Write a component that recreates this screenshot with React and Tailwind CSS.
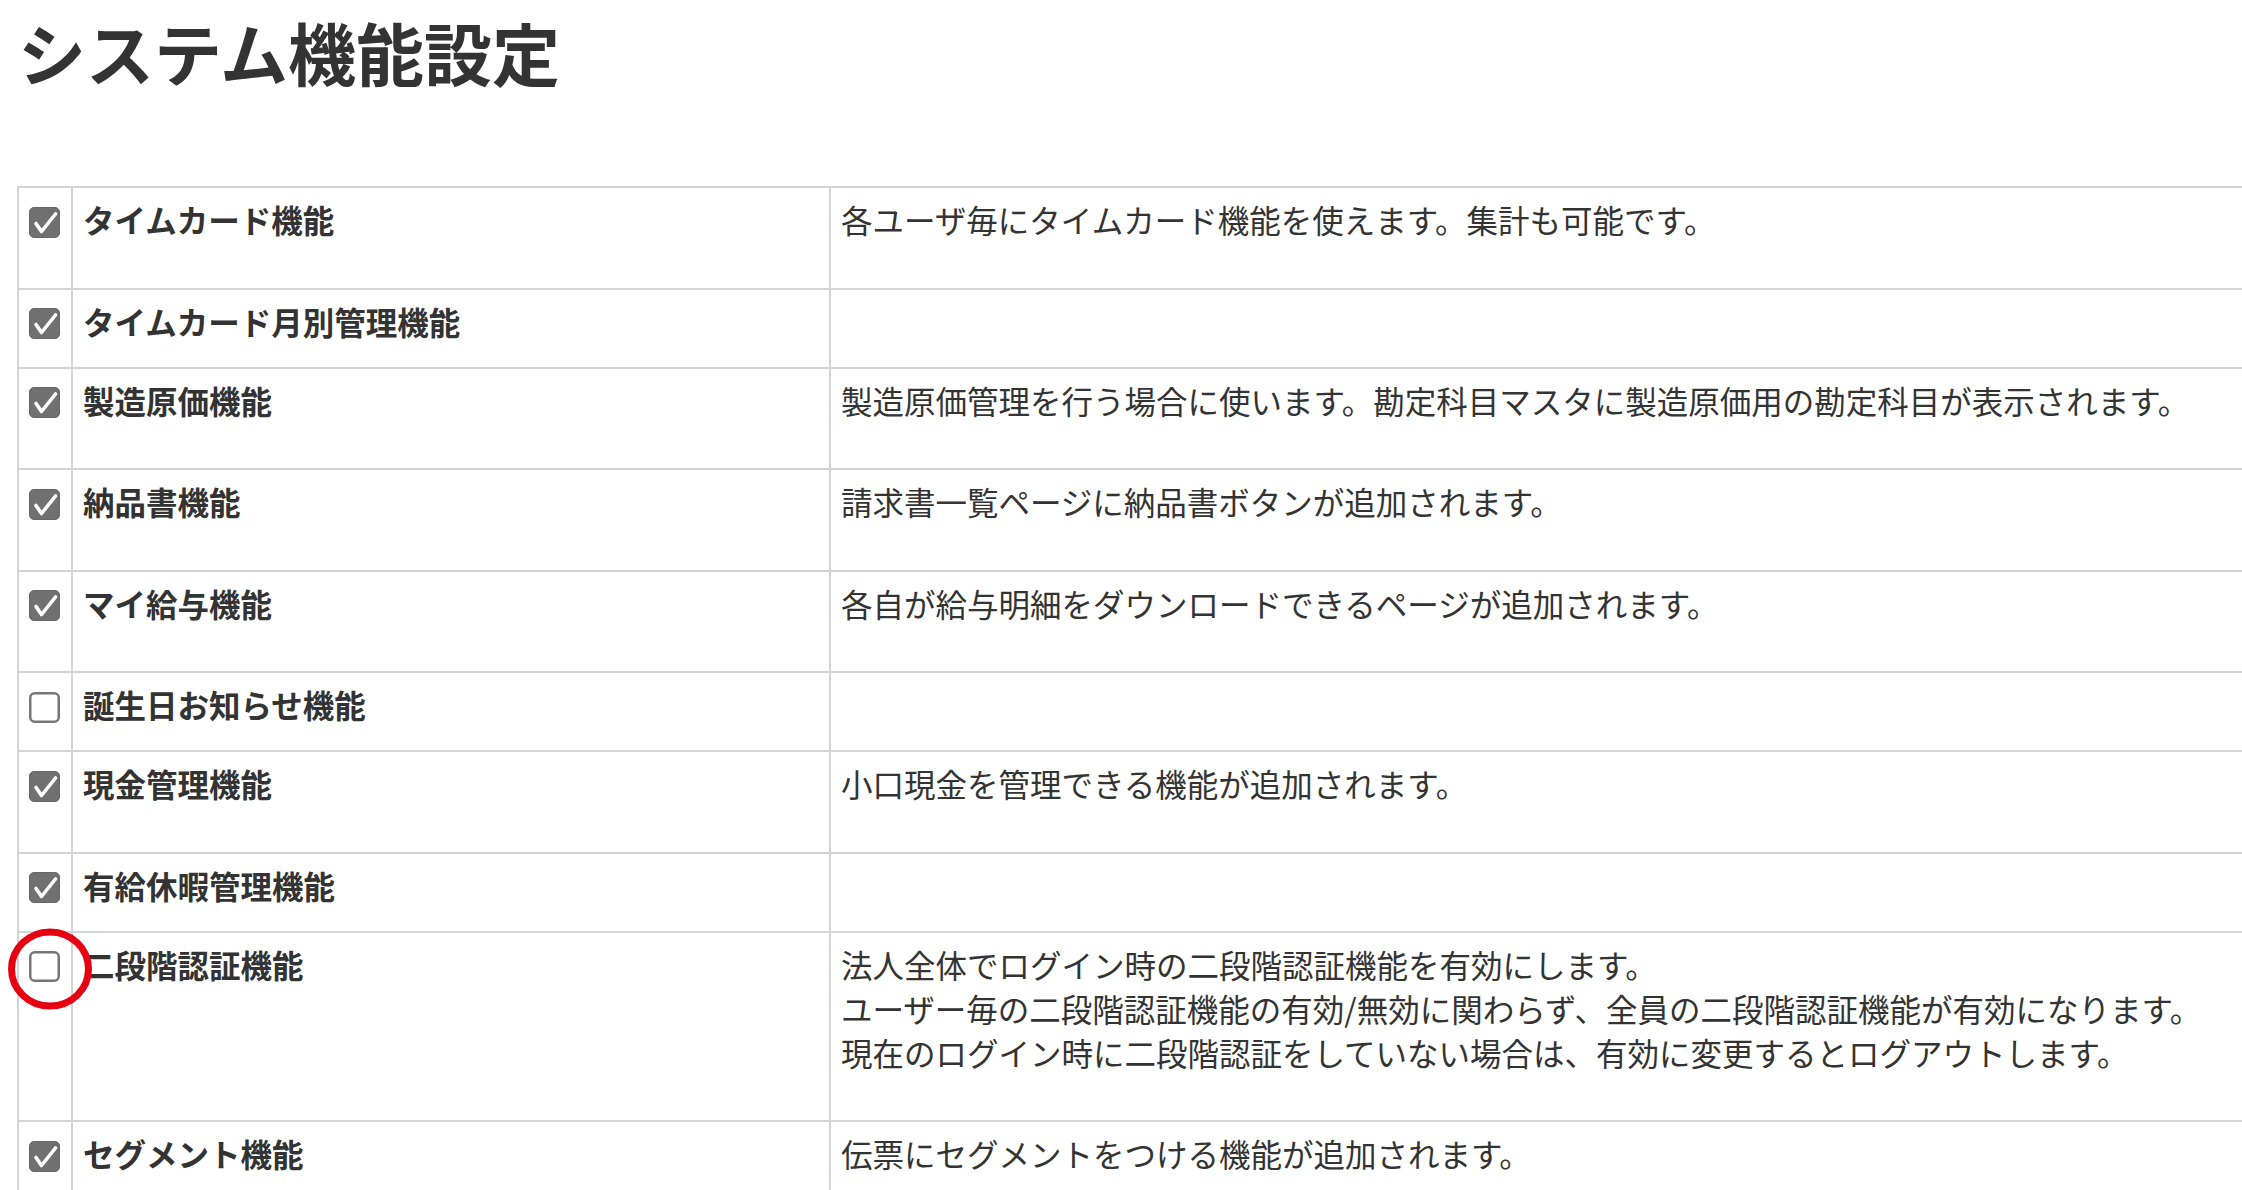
import React from "react";

const rows = [
  { name: "タイムカード機能", desc: ["各ユーザ毎にタイムカード機能を使えます。集計も可能です。"], checked: true },
  { name: "タイムカード月別管理機能", desc: [], checked: true },
  {
    name: "製造原価機能",
    desc: ["製造原価管理を行う場合に使います。勘定科目マスタに製造原価用の勘定科目が表示されます。"],
    checked: true,
  },
  { name: "納品書機能", desc: ["請求書一覧ページに納品書ボタンが追加されます。"], checked: true },
  { name: "マイ給与機能", desc: ["各自が給与明細をダウンロードできるページが追加されます。"], checked: true },
  { name: "誕生日お知らせ機能", desc: [], checked: false },
  { name: "現金管理機能", desc: ["小口現金を管理できる機能が追加されます。"], checked: true },
  { name: "有給休暇管理機能", desc: [], checked: true },
  {
    name: "二段階認証機能",
    desc: [
      "法人全体でログイン時の二段階認証機能を有効にします。",
      "ユーザー毎の二段階認証機能の有効/無効に関わらず、全員の二段階認証機能が有効になります。",
      "現在のログイン時に二段階認証をしていない場合は、有効に変更するとログアウトします。",
    ],
    checked: false,
    marked: true,
  },
  { name: "セグメント機能", desc: ["伝票にセグメントをつける機能が追加されます。"], checked: true },
];

const CheckBox = ({ checked, marked }) => (
  <span className="relative inline-block w-[31px] h-[31px]">
    {checked ? (
      <svg width="31" height="31" viewBox="0 0 31 31" className="block">
        <rect x="0.5" y="0.5" width="30" height="30" rx="4.5" fill="#707070" stroke="#666" />
        <path d="M7 16.5 L12.5 24.5 L26.5 7" fill="none" stroke="#fff" strokeWidth="3.6" strokeLinecap="round" strokeLinejoin="round" />
      </svg>
    ) : (
      <svg width="31" height="31" viewBox="0 0 31 31" className="block">
        <rect x="1.25" y="1.25" width="28.5" height="28.5" rx="4.5" fill="#fff" stroke="#767676" strokeWidth="2.5" />
      </svg>
    )}
    {marked && (
      // red annotation ring drawn over the unchecked box
      <svg width="88" height="84" viewBox="0 0 88 84" className="absolute left-[-23px] top-[-24px] pointer-events-none">
        <ellipse cx="44" cy="42" rx="38.5" ry="37" fill="none" stroke="#e60012" strokeWidth="7" />
      </svg>
    )}
  </span>
);

export default function App() {
  return (
    <div className="w-full h-[1190px] overflow-hidden bg-white text-[#333] font-['Noto_Sans_CJK_JP','Noto_Sans',sans-serif]">
      <h1 className="pl-[18px] pt-[18px] text-[68px] font-bold leading-none">システム機能設定</h1>

      <div className="pl-[17px] mt-[100px]">
        <table className="w-[2400px] table-fixed border-collapse">
          <colgroup>
            <col className="w-[54px]" />
            <col className="w-[758px]" />
            <col />
          </colgroup>
          <tbody>
            {rows.map((row) => (
              <tr key={row.name}>
                <td className="border-2 border-[#d4d4d4] pl-[10px] pt-[12px] pb-[21px] align-top">
                  <div className="h-[44px] flex items-center">
                    <CheckBox checked={row.checked} marked={row.marked} />
                  </div>
                </td>
                <td className="border-2 border-[#d4d4d4] pl-[10px] pt-[9px] pb-[24px] align-top text-[31.5px] leading-[44px] font-bold whitespace-nowrap">
                  {row.name}
                </td>
                <td className="border-2 border-[#d4d4d4] pl-[10px] pt-[9px] pb-[46.5px] align-top text-[31.5px] leading-[44px] whitespace-nowrap">
                  {row.desc.map((line) => (
                    <div key={line}>{line}</div>
                  ))}
                </td>
              </tr>
            ))}
          </tbody>
        </table>
      </div>
    </div>
  );
}
